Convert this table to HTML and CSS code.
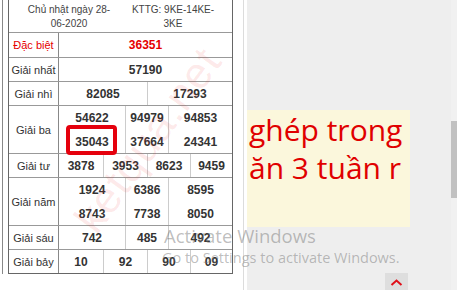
FILE: index.html
```
<!DOCTYPE html>
<html lang="vi">
<head>
<meta charset="utf-8">
<title>KQXS</title>
<link rel="stylesheet" href="styles.css">
</head>
<body>
<div class="screen">
  <div class="main">
    <div class="rail">
      <div class="kq">
        <div class="hdr">
          <div class="hc hc1">Chủ nhật ngày 28-<br>06-2020</div>
          <div class="hc hc2">KTTG: 9KE-14KE-<br>3KE</div>
        </div>
        <div class="row r-db">
          <div class="lbl red">Đặc biệt</div>
          <div class="cells g1"><div class="n red">36351</div></div>
        </div>
        <div class="row">
          <div class="lbl">Giải nhất</div>
          <div class="cells g1"><div class="n">57190</div></div>
        </div>
        <div class="row">
          <div class="lbl">Giải nhì</div>
          <div class="cells g2"><div class="n">82085</div><div class="n">17293</div></div>
        </div>
        <div class="row r-2">
          <div class="lbl">Giải ba</div>
          <div class="cells g3 two">
            <div class="n">54622</div><div class="n">94979</div><div class="n">94853</div>
            <div class="n mark">35043<span class="ring"></span></div><div class="n">37664</div><div class="n">24341</div>
          </div>
        </div>
        <div class="row">
          <div class="lbl">Giải tư</div>
          <div class="cells g4"><div class="n">3878</div><div class="n">3953</div><div class="n">8623</div><div class="n">9459</div></div>
        </div>
        <div class="row r-2">
          <div class="lbl">Giải năm</div>
          <div class="cells g3 two">
            <div class="n">1924</div><div class="n">6386</div><div class="n">8595</div>
            <div class="n">8743</div><div class="n">7738</div><div class="n">8050</div>
          </div>
        </div>
        <div class="row">
          <div class="lbl">Giải sáu</div>
          <div class="cells g3"><div class="n">742</div><div class="n">485</div><div class="n">492</div></div>
        </div>
        <div class="row">
          <div class="lbl">Giải bảy</div>
          <div class="cells g4"><div class="n">10</div><div class="n">92</div><div class="n">90</div><div class="n">09</div></div>
        </div>
      </div>
      <div class="wm">ketqua.net</div>
    </div>
  </div>
  <div class="side">
    <div class="side-body">
      <div class="note">ghép trong<br>ăn 3 tuần r</div>
    </div>
    <div class="track"><div class="thumb"></div></div>
  </div>
  <div class="activate">
    <div class="act1">Activate Windows</div>
    <div class="act2">Go to Settings to activate Windows.</div>
  </div>
  <div class="totop">
    <svg width="23" height="17" viewBox="0 0 23 17"><polyline points="6.5,12 11.5,7.5 16.5,12" fill="none" stroke="#e0101a" stroke-width="2"/></svg>
  </div>
</div>
</body>
</html>
```
FILE: styles.css
```
* { box-sizing: border-box; }
html, body { margin: 0; padding: 0; }
body {
  width: 457px;
  height: 290px;
  overflow: hidden;
  background: #fff;
  font-family: "Liberation Sans", Arial, sans-serif;
  color: #333;
}
.screen {
  position: relative;
  display: flex;
  width: 457px;
  height: 290px;
}
.main {
  width: 244px;
  flex: none;
  padding-left: 2px;
  border-right: 1px solid #dcdcdc;
}
.rail {
  position: relative;
  border-left: 1px solid #888;
  padding-left: 5px;
  overflow: hidden;
}
.kq {
  width: 225px;
  margin-top: -1px;
  border: 1px solid #666;
}
.hdr {
  display: flex;
  height: 32px;
  padding-top: 3px;
  font-size: 10px;
  line-height: 14px;
  color: #444;
  text-align: center;
}
.hc1 { width: 120px; }
.hc2 { flex: 1; padding-right: 15px; }
.row {
  display: flex;
  height: 24px;
  border-top: 1px solid #999;
}
.row.r-db { height: 25px; }
.row.r-2 { height: 48px; }
.lbl {
  width: 50px;
  flex: none;
  border-right: 1px solid #888;
  display: flex;
  align-items: center;
  justify-content: center;
  font-size: 11px;
  color: #333;
}
.cells {
  flex: 1;
  display: grid;
  grid-auto-rows: 1fr;
}
.g1 { grid-template-columns: 1fr; }
.g2 { grid-template-columns: 88px 85px; }
.g3 { grid-template-columns: 66px 43px 64px; }
.g4 { grid-template-columns: 44px 44px 43px 42px; }
.cells.two { grid-template-rows: 24px 23px; }
.n {
  display: flex;
  align-items: center;
  justify-content: center;
  font-size: 12px;
  font-weight: bold;
  color: #333;
  border-left: 1px solid #ccc;
}
.g1 .n,
.g2 .n:nth-child(2n+1),
.g3 .n:nth-child(3n+1),
.g4 .n:nth-child(4n+1) { border-left: none; }
.red { color: #e50000; }
.n.red { color: #e50000; }
.mark { position: relative; }
.ring {
  position: absolute;
  left: 7px;
  top: -5px;
  width: 51px;
  height: 30px;
  border: 4px solid #e5000d;
  border-radius: 4px;
}
.wm {
  position: absolute;
  left: 0px;
  top: 115px;
  width: 290px;
  line-height: 50px;
  text-align: center;
  font-size: 44px;
  letter-spacing: 1px;
  color: rgba(235, 40, 40, 0.10);
  transform: rotate(-54deg);
  pointer-events: none;
}
.side {
  margin-left: 3px;
  flex: 1;
  display: flex;
  background: #eeeeee;
}
.side-body { flex: 1; }
.note {
  margin-top: 110px;
  width: 163px;
  height: 117px;
  padding: 1px 0 0 2px;
  background: #fbf7dc;
  color: #e00000;
  font-family: "Open Sans", "Noto Sans", sans-serif;
  font-size: 30px;
  line-height: 38px;
  white-space: nowrap;
  overflow: hidden;
}
.track {
  width: 6px;
  flex: none;
  background: #f1f1f1;
}
.thumb {
  margin-top: 121px;
  height: 77px;
  background: #c1c1c1;
}
.activate {
  position: absolute;
  left: 162px;
  top: 224px;
  color: rgba(110, 110, 110, 0.45);
  font-family: "Open Sans", "Noto Sans", sans-serif;
  pointer-events: none;
}
.act1 { font-size: 18.5px; line-height: 24px; padding-left: 2px; }
.act2 { font-size: 14.5px; line-height: 18px; margin-top: 1px; }
.totop {
  position: absolute;
  left: 385px;
  top: 273px;
  width: 23px;
  height: 17px;
  background: #dedede;
}
.totop svg { display: block; }
```
